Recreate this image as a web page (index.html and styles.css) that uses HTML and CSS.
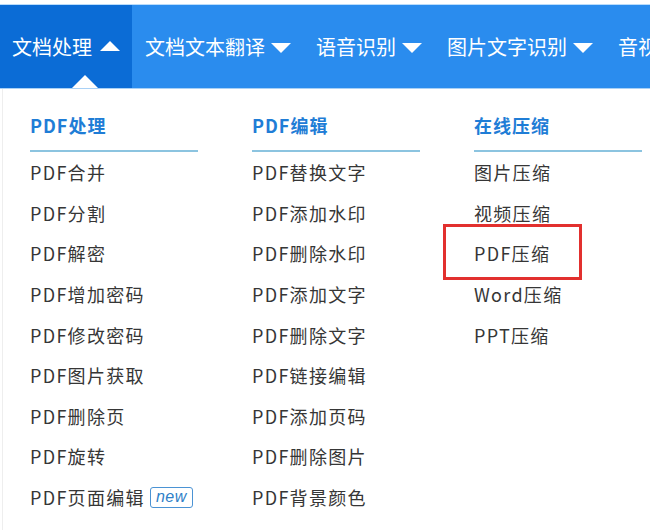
FILE: index.html
```html
<!DOCTYPE html>
<html lang="zh-CN">
<head>
<meta charset="utf-8">
<title>文档处理</title>
<link rel="stylesheet" href="styles.css">
</head>
<body>
<div class="page">
  <nav class="nav">
    <div class="nav-item active">文档处理<span class="caret up"></span></div>
    <div class="nav-item">文档文本翻译<span class="caret"></span></div>
    <div class="nav-item">语音识别<span class="caret"></span></div>
    <div class="nav-item">图片文字识别<span class="caret"></span></div>
    <div class="nav-item">音视频转换<span class="caret"></span></div>
  </nav>
  <div class="panel">
    <div class="col">
      <h3 class="col-title">PDF处理</h3>
      <ul class="list">
        <li>PDF合并</li>
        <li>PDF分割</li>
        <li>PDF解密</li>
        <li>PDF增加密码</li>
        <li>PDF修改密码</li>
        <li>PDF图片获取</li>
        <li>PDF删除页</li>
        <li>PDF旋转</li>
        <li>PDF页面编辑<span class="badge">new</span></li>
      </ul>
    </div>
    <div class="col">
      <h3 class="col-title">PDF编辑</h3>
      <ul class="list">
        <li>PDF替换文字</li>
        <li>PDF添加水印</li>
        <li>PDF删除水印</li>
        <li>PDF添加文字</li>
        <li>PDF删除文字</li>
        <li>PDF链接编辑</li>
        <li>PDF添加页码</li>
        <li>PDF删除图片</li>
        <li>PDF背景颜色</li>
        <li>PDF删除空白页</li>
      </ul>
    </div>
    <div class="col">
      <h3 class="col-title">在线压缩</h3>
      <ul class="list">
        <li>图片压缩</li>
        <li>视频压缩</li>
        <li class="marked">PDF压缩<span class="highlight"></span></li>
        <li>Word压缩</li>
        <li>PPT压缩</li>
      </ul>
    </div>
  </div>
</div>
</body>
</html>
```
FILE: styles.css
```css
html, body {
  margin: 0;
  padding: 0;
  background: #ffffff;
}
body {
  width: 650px;
  height: 530px;
  overflow: hidden;
  font-family: "Noto Sans CJK SC", "Noto Sans", sans-serif;
}
.page {
  padding-top: 4px;
}
.nav {
  display: flex;
  height: 83px;
  border-top: 1px solid #b9dcfb;
  border-bottom: 1px solid #a9d1f6;
  background: #2a8cee;
  white-space: nowrap;
  overflow: hidden;
}
.nav-item {
  display: flex;
  align-items: center;
  gap: 6px;
  padding: 0 12px 0 13px;
  font-size: 20px;
  color: #ffffff;
  flex-shrink: 0;
}
.nav-item.active {
  position: relative;
  background: #0b6cd6;
  padding: 0 12px;
  gap: 8px;
}
.nav-item.active::after {
  content: "";
  position: absolute;
  left: 72px;
  bottom: 0;
  border-left: 13px solid transparent;
  border-right: 13px solid transparent;
  border-bottom: 13px solid #ffffff;
}
.caret {
  display: inline-block;
  width: 0;
  height: 0;
  border-left: 10px solid transparent;
  border-right: 10px solid transparent;
  border-top: 10px solid #ffffff;
  margin-top: 2px;
}
.caret.up {
  border-top: 0;
  border-bottom: 10px solid #ffffff;
  margin-top: -2px;
}
.panel {
  display: grid;
  grid-template-columns: repeat(3, 168px);
  column-gap: 54px;
  padding: 11px 0 0 27px;
  border-left: 1px solid #eeeeee;
  margin-left: 2px;
}
.col-title {
  margin: 0;
  font-size: 18px;
  font-weight: bold;
  line-height: 50px;
  letter-spacing: 1px;
  color: #1f7dd6;
  border-bottom: 2px solid #8cc4e0;
}
.list {
  list-style: none;
  margin: 0;
  padding: 0;
}
.list li {
  display: flex;
  align-items: center;
  height: 40.6px;
  font-size: 18px;
  color: #363636;
  letter-spacing: 1.3px;
  white-space: nowrap;
}
.list li.marked {
  position: relative;
}
.highlight {
  position: absolute;
  left: -31px;
  top: -9px;
  width: 133px;
  height: 50px;
  border: 3px solid #e2302e;
}
.badge {
  display: inline-block;
  margin-left: 5px;
  width: 41px;
  height: 19px;
  line-height: 18px;
  border: 1.5px solid #4b93d4;
  border-radius: 3px;
  text-align: center;
  font-family: "Liberation Sans", Arial, sans-serif;
  font-style: italic;
  font-size: 16px;
  letter-spacing: 0.5px;
  color: #2f7fc8;
}
```
